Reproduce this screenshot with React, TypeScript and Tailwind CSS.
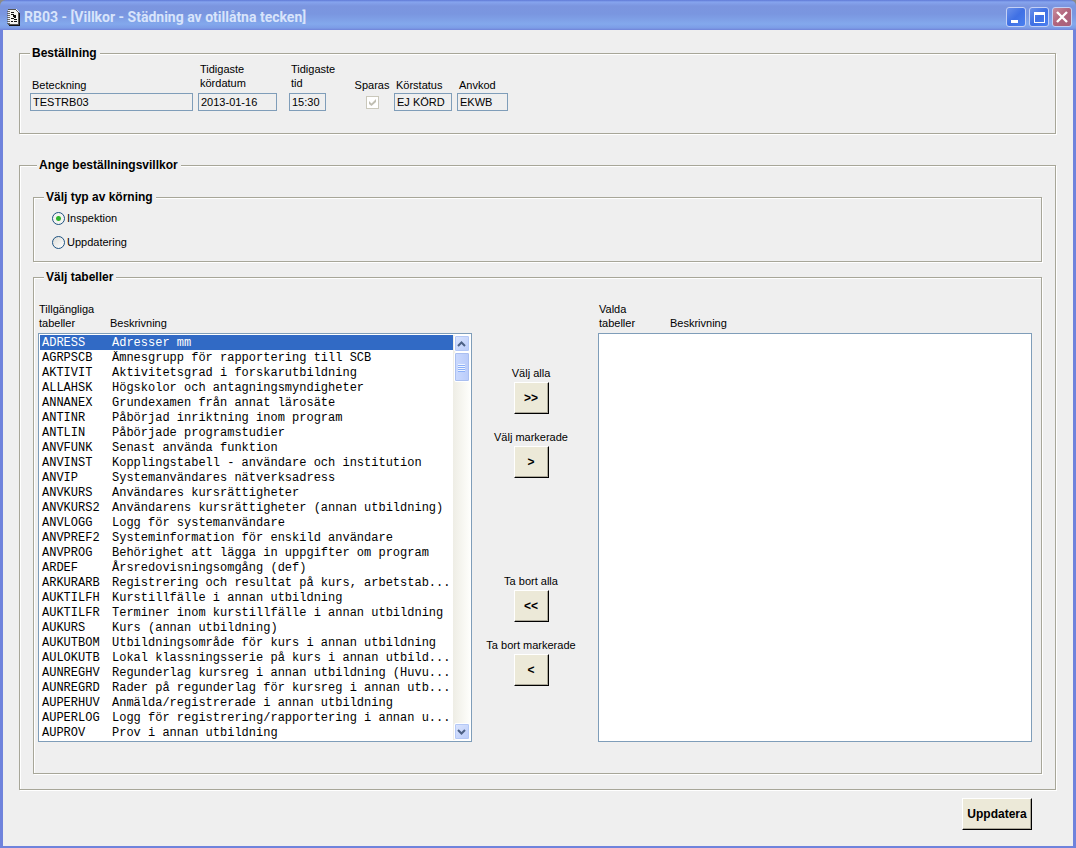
import { useState } from 'react'
import type { ReactNode } from 'react'

interface TableRow {
  code: string;
  description: string;
}

const TABLES: TableRow[] = [
  { code: 'ADRESS', description: 'Adresser mm' },
  { code: 'AGRPSCB', description: 'Ämnesgrupp för rapportering till SCB' },
  { code: 'AKTIVIT', description: 'Aktivitetsgrad i forskarutbildning' },
  { code: 'ALLAHSK', description: 'Högskolor och antagningsmyndigheter' },
  { code: 'ANNANEX', description: 'Grundexamen från annat lärosäte' },
  { code: 'ANTINR', description: 'Påbörjad inriktning inom program' },
  { code: 'ANTLIN', description: 'Påbörjade programstudier' },
  { code: 'ANVFUNK', description: 'Senast använda funktion' },
  { code: 'ANVINST', description: 'Kopplingstabell - användare och institution' },
  { code: 'ANVIP', description: 'Systemanvändares nätverksadress' },
  { code: 'ANVKURS', description: 'Användares kursrättigheter' },
  { code: 'ANVKURS2', description: 'Användarens kursrättigheter (annan utbildning)' },
  { code: 'ANVLOGG', description: 'Logg för systemanvändare' },
  { code: 'ANVPREF2', description: 'Systeminformation för enskild användare' },
  { code: 'ANVPROG', description: 'Behörighet att lägga in uppgifter om program' },
  { code: 'ARDEF', description: 'Årsredovisningsomgång (def)' },
  { code: 'ARKURARB', description: 'Registrering och resultat på kurs, arbetstab...' },
  { code: 'AUKTILFH', description: 'Kurstillfälle i annan utbildning' },
  { code: 'AUKTILFR', description: 'Terminer inom kurstillfälle i annan utbildning' },
  { code: 'AUKURS', description: 'Kurs (annan utbildning)' },
  { code: 'AUKUTBOM', description: 'Utbildningsområde för kurs i annan utbildning' },
  { code: 'AULOKUTB', description: 'Lokal klassningsserie på kurs i annan utbild...' },
  { code: 'AUNREGHV', description: 'Regunderlag kursreg i annan utbildning (Huvu...' },
  { code: 'AUNREGRD', description: 'Rader på regunderlag för kursreg i annan utb...' },
  { code: 'AUPERHUV', description: 'Anmälda/registrerade i annan utbildning' },
  { code: 'AUPERLOG', description: 'Logg för registrering/rapportering i annan u...' },
  { code: 'AUPROV', description: 'Prov i annan utbildning' },
]

function TitleBar() {
  return (
    <div className="bg-[#8b8a86]">
      <header className="flex h-[30px] items-center rounded-t-md bg-[linear-gradient(#5f79d6_0,#86a4ee_2px,#7b95df_6px,#7a96e0_14px,#83a8ec_24px,#7c9ce6_28px,#7083d8_30px)] pt-1 pl-[7px] pr-1">
        <svg width="13" height="17" viewBox="0 0 13 17" shapeRendering="crispEdges" aria-hidden="true">
          <path d="M1 0h8l3 3v13H1z" fill="#f4f4f2" />
          <path d="M1 0h8v1H1zM9 1h1v1H9zM10 2h1v1h-1zM11 3h1v13h-1zM1 15h11v1H1z" fill="#555" />
          <path d="M12 4h1v13H2v-1h10z" fill="#111" />
          <path d="M0 2h3v1H0zM0 4h3v1H0zM0 6h3v1H0zM0 8h3v1H0zM0 10h3v1H0zM0 12h3v1H0zM0 14h3v1H0z" fill="#666" />
          <path d="M4 3h3v1H4zM4 5h3v1H4zM6 6h3v2H6zM4 9h3v1H4zM7 8h2v1H7zM7 10h3v1H7zM4 12h2v1H4zM7 12h3v1H7z" fill="#111" />
        </svg>
        <h1 className="ml-1 flex-1 truncate font-[Roboto,'Open_Sans',sans-serif] text-[14px] leading-4 font-bold text-[#d8e4fb]">
          RB03 - [Villkor - Städning av otillåtna tecken]
        </h1>
        <div className="flex gap-[3px]">
          <CaptionButton label="Minimera">
            <path d="M5 13h7v3H5z" fill="#fff" />
          </CaptionButton>
          <CaptionButton label="Maximera">
            <path d="M5 5h11v11H5zM6 8v7h9V8z" fill="#fff" fillRule="evenodd" />
          </CaptionButton>
          <CaptionButton label="Stäng" danger>
            <path d="M5 5l10 10M15 5l-10 10" stroke="#fff" strokeWidth="2.4" />
          </CaptionButton>
        </div>
      </header>
    </div>
  )
}

function CaptionButton({ label, danger, children }: { label: string; danger?: boolean; children: ReactNode }) {
  return (
    <button
      type="button"
      aria-label={label}
      className={`size-5 overflow-hidden rounded-[3px] border border-[#c3d0f6] ${
        danger
          ? 'bg-[linear-gradient(135deg,#c98c9c,#b0647c_50%,#a8607c)]'
          : 'bg-[linear-gradient(135deg,#6a90ea,#3f70e4_50%,#4a80f0)]'
      }`}
    >
      <svg width="18" height="18" viewBox="1 1 18 18" aria-hidden="true">
        {children}
      </svg>
    </button>
  )
}

function GroupBox({ title, className, legendClassName, children }: {
  title: string;
  className: string;
  legendClassName: string;
  children: ReactNode;
}) {
  return (
    <fieldset className={`min-w-0 border border-[#a7a698] shadow-[1px_1px_0_#fff,inset_1px_1px_0_#fff] ${className}`}>
      <legend className={`bg-[#efefef] pr-[3px] text-[12px] leading-[15px] font-bold ${legendClassName}`}>{title}</legend>
      {children}
    </fieldset>
  )
}

function Field({ id, label, value, className, twoLines }: {
  id: string;
  label: ReactNode;
  value: string;
  className: string;
  twoLines?: boolean;
}) {
  return (
    <div className={`flex flex-col ${className}`}>
      <label htmlFor={id} className={`pl-0.5 whitespace-nowrap ${twoLines ? 'mb-[3px]' : 'mb-px'}`}>{label}</label>
      <input id={id} readOnly value={value} className="h-[18px] w-full border border-[#7f9db9] bg-[#efefef] px-0.5 outline-none" />
    </div>
  )
}

function RadioOption({ label, checked, onChange }: { label: string; checked: boolean; onChange: () => void }) {
  return (
    <label className="flex h-6 w-max items-center gap-0.5">
      <input
        type="radio"
        name="runType"
        checked={checked}
        onChange={onChange}
        className="size-[13px] appearance-none rounded-full border border-[#1d5281] bg-[linear-gradient(135deg,#dcdcd7,#fff)] checked:bg-[radial-gradient(circle,#2fb52f_0_2px,#f4f4f1_3px)]"
      />
      {label}
    </label>
  )
}

function Scrollbar() {
  const buttonStyle = 'flex h-[17px] w-4 items-center justify-center rounded-[2px] border border-white bg-[linear-gradient(135deg,#dbe5fe,#b9cbf9)] shadow-[inset_0_0_0_1px_#b4c8f6]'

  return (
    <div className="flex w-[17px] flex-col items-center bg-[linear-gradient(90deg,#eeede5,#fefefb)]">
      <button type="button" aria-label="Rulla upp" className={buttonStyle}>
        <svg width="9" height="6" viewBox="0 0 9 6" aria-hidden="true">
          <path d="M1 5l3.5-3.5L8 5" fill="none" stroke="#4d6185" strokeWidth="2" />
        </svg>
      </button>
      <div className="flex h-[30px] w-4 flex-col items-center justify-center gap-px rounded-[2px] border border-white bg-[linear-gradient(90deg,#cbdafe,#b9cbfa)] shadow-[inset_0_0_0_1px_#aabff0]">
        {[0, 1, 2, 3].map((i) => (
          <span key={i} className="h-px w-[7px] bg-[#eef4fe] shadow-[0_1px_0_#8cb0f8]" />
        ))}
      </div>
      <button type="button" aria-label="Rulla ner" className={`mt-auto ${buttonStyle}`}>
        <svg width="9" height="6" viewBox="0 0 9 6" aria-hidden="true">
          <path d="M1 1l3.5 3.5L8 1" fill="none" stroke="#4d6185" strokeWidth="2" />
        </svg>
      </button>
    </div>
  )
}

function TableList({ id, heading, rows, marked, onToggle }: {
  id: string;
  heading: string;
  rows: TableRow[];
  marked: string[];
  onToggle: (code: string) => void;
}) {
  return (
    <section className="min-w-0">
      <div className="mb-[3px] flex items-end pl-px">
        <h3 id={id} className="w-[71px]">{heading}<br />tabeller</h3>
        <span>Beskrivning</span>
      </div>
      <div className="flex h-[409px] border border-[#7f9db9] bg-white p-px">
        <div className="min-w-0 flex-1 overflow-hidden">
          <table aria-labelledby={id} className="w-full table-fixed font-['Liberation_Mono',monospace] text-[12px] leading-[13px]">
            <colgroup>
              <col className="w-[70px]" />
              <col />
            </colgroup>
            <tbody>
              {rows.map((row) => (
                <tr
                  key={row.code}
                  onClick={() => onToggle(row.code)}
                  className={`cursor-default whitespace-nowrap ${marked.includes(row.code) ? 'bg-[#316ac5] text-white' : ''}`}
                >
                  <td className="pt-0.5 pl-0.5">{row.code}</td>
                  <td className="pt-0.5 pl-0.5">{row.description}</td>
                </tr>
              ))}
            </tbody>
          </table>
        </div>
        {rows.length > 26 && <Scrollbar />}
      </div>
    </section>
  )
}

const raised = 'border border-t-white border-l-white border-r-black border-b-black bg-[#ece9d8] font-bold shadow-[inset_-1px_-1px_0_#aca899]'

function MoveButton({ id, label, symbol, onClick }: { id: string; label: string; symbol: string; onClick: () => void }) {
  return (
    <div className="flex flex-col items-center gap-0.5">
      <label htmlFor={id} className="whitespace-nowrap">{label}</label>
      <button id={id} type="button" onClick={onClick} className={`h-8 w-[35px] text-[12px] ${raised}`}>
        {symbol}
      </button>
    </div>
  )
}

export default function App() {
  const [runType, setRunType] = useState('inspektion')
  const [chosen, setChosen] = useState<string[]>([])
  const [marked, setMarked] = useState<string[]>(['ADRESS'])

  const available = TABLES.filter((t) => !chosen.includes(t.code))
  const selected = TABLES.filter((t) => chosen.includes(t.code))

  const toggle = (code: string) => {
    setMarked(marked.includes(code) ? marked.filter((c) => c !== code) : [...marked, code])
  }

  const move = (next: string[]) => {
    setChosen(next)
    setMarked([])
  }

  return (
    <div className="flex min-h-screen flex-col bg-[#6f83dc] font-['Liberation_Sans',Arial,sans-serif] text-[11px] leading-[14px] text-black">
      <TitleBar />
      <main className="mx-[3px] mb-0.5 flex-1 bg-[#efefef] pt-4 pr-[17px] pb-4 pl-4">
        <GroupBox title="Beställning" className="pr-2 pb-[22px] pl-[10px]" legendClassName="pl-0.5">
          <div className="flex items-end pt-px">
            <Field id="beteckning" label="Beteckning" value="TESTRB03" className="w-[163px]" />
            <Field id="kordatum" label={<>Tidigaste<br />kördatum</>} value="2013-01-16" className="ml-[5px] w-[79px]" twoLines />
            <Field id="tid" label={<>Tidigaste<br />tid</>} value="15:30" className="ml-3 w-[37px]" twoLines />
            <div className="mr-0.5 ml-[26px] flex w-10 flex-col items-center">
              <label htmlFor="sparas" className="mb-px">Sparas</label>
              <span className="relative flex h-[18px] items-center">
                <input id="sparas" type="checkbox" checked disabled readOnly className="size-[13px] appearance-none border border-[#cac8bb] bg-white" />
                <svg className="pointer-events-none absolute top-[6px] left-[3px]" width="7" height="7" viewBox="0 0 7 7" aria-hidden="true">
                  <path d="M0 2l2.5 2.5L7 0v3L2.5 7 0 5z" fill="#c0beb2" />
                </svg>
              </span>
            </div>
            <Field id="korstatus" label="Körstatus" value="EJ KÖRD" className="w-[58px]" />
            <Field id="anvkod" label="Anvkod" value="EKWB" className="ml-[5px] w-[51px]" />
          </div>
        </GroupBox>

        <GroupBox title="Ange beställningsvillkor" className="mt-6 px-[13px] pb-[15px]" legendClassName="ml-1 pl-0.5">
          <GroupBox title="Välj typ av körning" className="mt-[17px] pr-2 pb-[7px] pl-[10px]" legendClassName="pl-0.5">
            <div className="pt-px pl-2">
              <RadioOption label="Inspektion" checked={runType === 'inspektion'} onChange={() => setRunType('inspektion')} />
              <RadioOption label="Uppdatering" checked={runType === 'uppdatering'} onChange={() => setRunType('uppdatering')} />
            </div>
          </GroupBox>

          <GroupBox title="Välj tabeller" className="mt-2 pr-[9px] pb-[31px] pl-1" legendClassName="ml-[6px] pl-0.5">
            <div className="grid grid-cols-[minmax(0,1fr)_126px_minmax(0,1fr)] pt-[17px]">
              <TableList id="available" heading="Tillgängliga" rows={available} marked={marked} onToggle={toggle} />
              <div className="flex flex-col gap-4 pt-16 pr-2">
                <MoveButton id="add-all" label="Välj alla" symbol=">>" onClick={() => move(TABLES.map((t) => t.code))} />
                <MoveButton id="add-marked" label="Välj markerade" symbol=">" onClick={() => move([...chosen, ...marked])} />
                <div className="h-16" />
                <MoveButton id="remove-all" label="Ta bort alla" symbol="<<" onClick={() => move([])} />
                <MoveButton id="remove-marked" label="Ta bort markerade" symbol="<" onClick={() => move(chosen.filter((c) => !marked.includes(c)))} />
              </div>
              <TableList id="selected" heading="Valda" rows={selected} marked={marked} onToggle={toggle} />
            </div>
          </GroupBox>
        </GroupBox>

        <div className="mt-2 flex justify-end pr-6">
          <button type="button" className={`h-8 w-[70px] text-[12px] ${raised}`}>Uppdatera</button>
        </div>
      </main>
    </div>
  )
}
